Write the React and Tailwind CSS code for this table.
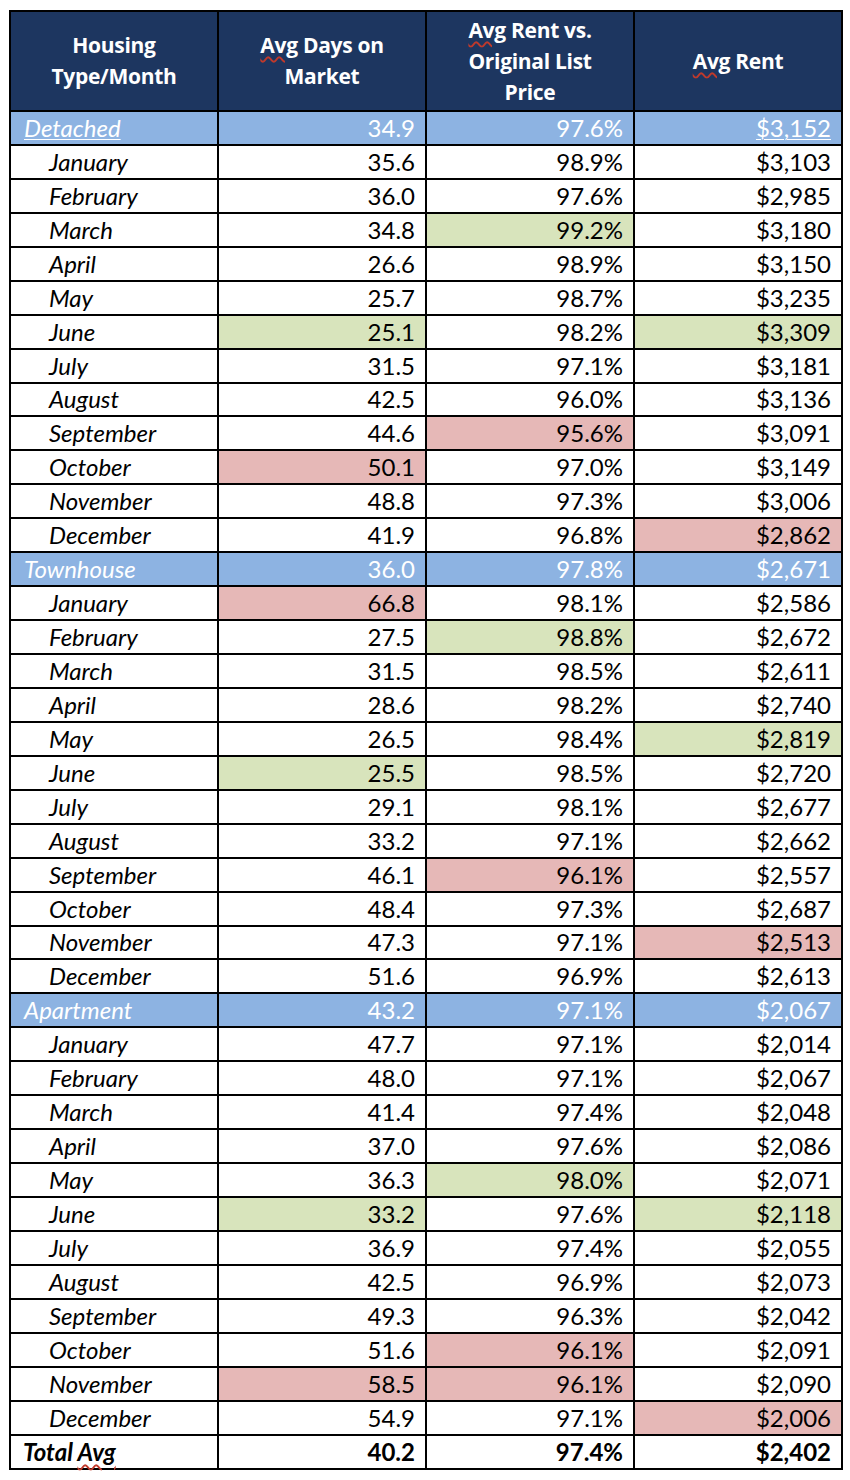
import React from 'react'

const G = 'g'
const R = 'r'

// rows: [month, days, pct, rent, highlights {d,p,r}]
const groups = [
  {
    name: 'Detached',
    underline: true,
    total: ['34.9', '97.6%', '$3,152'],
    rows: [
      ['January', '35.6', '98.9%', '$3,103'],
      ['February', '36.0', '97.6%', '$2,985'],
      ['March', '34.8', '99.2%', '$3,180', { p: G }],
      ['April', '26.6', '98.9%', '$3,150'],
      ['May', '25.7', '98.7%', '$3,235'],
      ['June', '25.1', '98.2%', '$3,309', { d: G, r: G }],
      ['July', '31.5', '97.1%', '$3,181'],
      ['August', '42.5', '96.0%', '$3,136'],
      ['September', '44.6', '95.6%', '$3,091', { p: R }],
      ['October', '50.1', '97.0%', '$3,149', { d: R }],
      ['November', '48.8', '97.3%', '$3,006'],
      ['December', '41.9', '96.8%', '$2,862', { r: R }],
    ],
  },
  {
    name: 'Townhouse',
    total: ['36.0', '97.8%', '$2,671'],
    rows: [
      ['January', '66.8', '98.1%', '$2,586', { d: R }],
      ['February', '27.5', '98.8%', '$2,672', { p: G }],
      ['March', '31.5', '98.5%', '$2,611'],
      ['April', '28.6', '98.2%', '$2,740'],
      ['May', '26.5', '98.4%', '$2,819', { r: G }],
      ['June', '25.5', '98.5%', '$2,720', { d: G }],
      ['July', '29.1', '98.1%', '$2,677'],
      ['August', '33.2', '97.1%', '$2,662'],
      ['September', '46.1', '96.1%', '$2,557', { p: R }],
      ['October', '48.4', '97.3%', '$2,687'],
      ['November', '47.3', '97.1%', '$2,513', { r: R }],
      ['December', '51.6', '96.9%', '$2,613'],
    ],
  },
  {
    name: 'Apartment',
    total: ['43.2', '97.1%', '$2,067'],
    rows: [
      ['January', '47.7', '97.1%', '$2,014'],
      ['February', '48.0', '97.1%', '$2,067'],
      ['March', '41.4', '97.4%', '$2,048'],
      ['April', '37.0', '97.6%', '$2,086'],
      ['May', '36.3', '98.0%', '$2,071', { p: G }],
      ['June', '33.2', '97.6%', '$2,118', { d: G, r: G }],
      ['July', '36.9', '97.4%', '$2,055'],
      ['August', '42.5', '96.9%', '$2,073'],
      ['September', '49.3', '96.3%', '$2,042'],
      ['October', '51.6', '96.1%', '$2,091', { p: R }],
      ['November', '58.5', '96.1%', '$2,090', { d: R, p: R }],
      ['December', '54.9', '97.1%', '$2,006', { r: R }],
    ],
  },
]

const fill = (h) =>
  h === G ? 'bg-[#d8e4bc]' : h === R ? 'bg-[#e6b8b7]' : 'bg-white'

// spell-check squiggle under "Avg"
const Avg = () => (
  <span className="underline decoration-wavy decoration-[#c0392b] decoration-2 underline-offset-[3px]">Avg</span>
)

const cell = 'border-2 border-black h-[33.95px] p-0 text-[24px] leading-none'
const head = 'border-2 border-black px-2 font-bold tracking-[-0.3px]'

export default function App() {
  return (
    <div className="w-[850px] h-[1480px] bg-white pt-[10px] pl-[9px]" style={{ fontFamily: 'Lato, "Open Sans", sans-serif' }}>
      <table className="w-[832px] table-fixed border-collapse border-2 border-black">
        <colgroup>
          <col className="w-[208px]" />
          <col className="w-[208px]" />
          <col className="w-[208px]" />
          <col className="w-[208px]" />
        </colgroup>
        <thead>
          <tr className="h-[100px] bg-[#1d3660] text-white text-[21px] leading-[31px] font-['Open_Sans',sans-serif]">
            <th className={head}>Housing<br />Type/Month</th>
            <th className={head}><Avg /> Days on<br />Market</th>
            <th className={head}><Avg /> Rent vs.<br />Original List<br />Price</th>
            <th className={head}><Avg /> Rent</th>
          </tr>
        </thead>
        <tbody>
          {groups.map((g) => (
            <React.Fragment key={g.name}>
              <tr className="bg-[#8db3e2] text-white">
                <td className={`${cell} pl-[13px] italic text-left`}>
                  <span className={g.underline ? 'underline underline-offset-2 decoration-1' : ''}>{g.name}</span>
                </td>
                <td className={`${cell} pr-[10px] text-right`}>{g.total[0]}</td>
                <td className={`${cell} pr-[10px] text-right`}>{g.total[1]}</td>
                <td className={`${cell} pr-[10px] text-right`}>
                  <span className={g.underline ? 'underline underline-offset-2 decoration-1' : ''}>{g.total[2]}</span>
                </td>
              </tr>
              {g.rows.map(([m, d, p, r, h = {}]) => (
                <tr key={g.name + m} className="text-black">
                  <td className={`${cell} pl-[38px] italic text-left bg-white`}>{m}</td>
                  <td className={`${cell} pr-[10px] text-right ${fill(h.d)}`}>{d}</td>
                  <td className={`${cell} pr-[10px] text-right ${fill(h.p)}`}>{p}</td>
                  <td className={`${cell} pr-[10px] text-right ${fill(h.r)}`}>{r}</td>
                </tr>
              ))}
            </React.Fragment>
          ))}
          <tr className="text-black font-bold">
            <td className={`${cell} pl-[12px] italic text-left`}>Total <Avg /></td>
            <td className={`${cell} pr-[10px] text-right`}>40.2</td>
            <td className={`${cell} pr-[10px] text-right`}>97.4%</td>
            <td className={`${cell} pr-[10px] text-right`}>$2,402</td>
          </tr>
        </tbody>
      </table>
    </div>
  )
}
